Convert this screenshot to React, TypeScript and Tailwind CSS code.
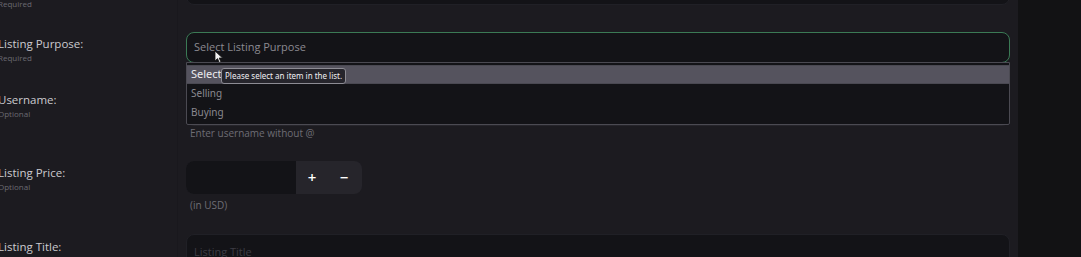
import React from "react";

const font = { fontFamily: '"Open Sans", "Noto Sans", sans-serif' };

function Label({ title, sub, mt }: { title?: string; sub: string; mt: string }) {
  return (
    <div className={`shrink-0 flex flex-col ${mt}`}>
      {title && <div className="text-[11.5px] leading-[14px] font-medium text-[#cbcacf] whitespace-nowrap">{title}</div>}
      {sub && <div className={`text-[8px] leading-[10px] text-[#6b6a72] whitespace-nowrap ${title ? "mt-[2px]" : ""}`}>{sub}</div>}
    </div>
  );
}

export default function App() {
  return (
    <div className="w-[1081px] h-[257px] overflow-hidden flex items-start bg-[#1c1b20]" style={font}>
      {/* labels column */}
      <div className="w-[180px] h-[257px] shrink-0 border-r border-[#19181d] -ml-[2px] flex flex-col">
        <Label sub="Required" mt="-mt-[1px]" />
        <Label title="Listing Purpose:" sub="Required" mt="mt-[28px]" />
        <Label title="Username:" sub="Optional" mt="mt-[30px]" />
        <Label title="Listing Price:" sub="Optional" mt="mt-[47px]" />
        <Label title="Listing Title:" sub="" mt="mt-[48px]" />
      </div>

      {/* fields column */}
      <div className="relative w-[840px] h-[257px] shrink-0 pl-[8px] pr-[8px] flex flex-col">
        <div className="shrink-0 h-[30px] -mt-[25px] rounded-[8px] bg-[#131317] border border-[#202026]" />

        <div className="shrink-0 relative mt-[27px] h-[31px] rounded-[8px] bg-[#131317] border border-[#3b7a55] flex items-center pl-[7px]">
          <span className="text-[11px] text-[#8b8a91]">Select Listing Purpose</span>
          {/* cursor */}
          <svg className="absolute left-[27px] top-[17px]" width="10" height="14" viewBox="0 0 10 14">
            <path d="M1 1 L1 11 L3.5 8.6 L5.3 12.6 L6.9 11.9 L5.2 8 L8.6 8 Z" fill="#f2f2f2" stroke="#111" strokeWidth="0.8" strokeLinejoin="round" />
          </svg>
        </div>

        <div className="shrink-0 mt-[32px] h-[31px] rounded-[8px] bg-[#131317] border border-[#26252b]" />
        <div className="shrink-0 pl-[4px] text-[10px] leading-[14px] text-[#6e6d75]">Enter username without @</div>

        <div className="shrink-0 mt-[21px] w-[176px] h-[33px] rounded-[8px] overflow-hidden flex bg-[#26252b]">
          <div className="w-[110px] bg-[#131317]" />
          <div className="flex-1 flex items-center justify-around text-white text-[15px] font-semibold pr-[2px]">
            <span>+</span>
            <span>−</span>
          </div>
        </div>
        <div className="shrink-0 mt-[4px] pl-[4px] text-[10px] leading-[14px] text-[#6e6d75]">(in USD)</div>

        <div className="shrink-0 mt-[22px] h-[40px] rounded-[8px] bg-[#131317] border border-[#202026] pl-[7px] pt-[3px]">
          <span className="text-[11px] leading-[14px] text-[#3d3c44]">Listing Title</span>
        </div>

        {/* native dropdown overlay */}
        <div className="absolute left-[8px] right-[8px] top-[62px] h-[63px] bg-[#131317] border border-[#4b4a52] rounded-b-[2px] pt-[2px]" style={{ fontFamily: '"Noto Sans", "Liberation Sans", sans-serif' }}>
          <div className="h-[19px] bg-[#55535e] border-y border-[#4a4952] flex items-center pl-[4px] text-[11px] text-[#ececef]">Select</div>
          <div className="h-[19px] flex items-center pl-[4px] text-[10px] text-[#8a8990]">Selling</div>
          <div className="h-[19px] flex items-center pl-[4px] text-[10px] text-[#8a8990]">Buying</div>

          {/* tooltip */}
          <div className="absolute left-[34px] top-[5px] h-[16px] px-[3px] flex items-center rounded-[3px] border border-[#8d8c94] bg-[#26252c] text-[8px] text-[#f0eff3] whitespace-nowrap" style={{ fontFamily: '"Noto Sans", sans-serif' }}>
            Please select an item in the list.
          </div>
        </div>
      </div>

      {/* right dark panel */}
      <div className="flex-1 h-[257px] bg-[#121214]" />
    </div>
  );
}
